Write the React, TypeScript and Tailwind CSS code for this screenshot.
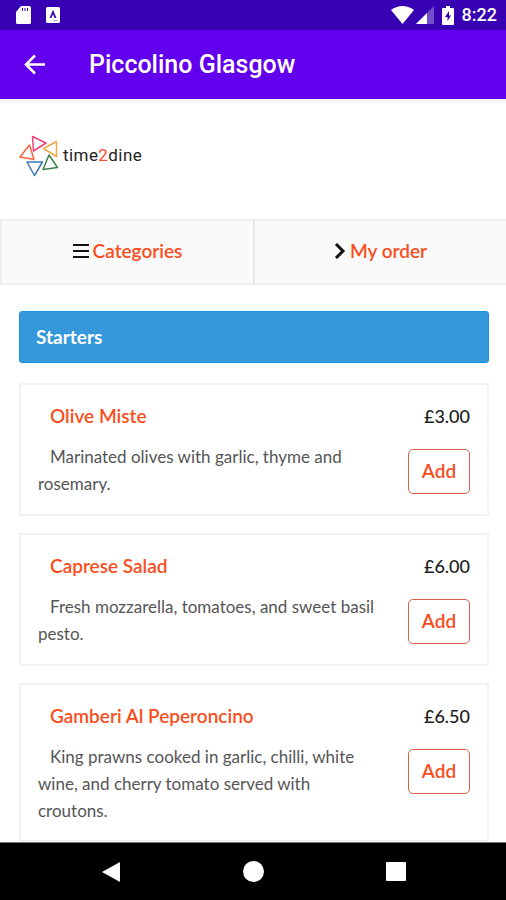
type Dish = { name: string; description: string; price: string };

const dishes: Dish[] = [
  { name: "Olive Miste", description: "Marinated olives with garlic, thyme and rosemary.", price: "£3.00" },
  { name: "Caprese Salad", description: "Fresh mozzarella, tomatoes, and sweet basil pesto.", price: "£6.00" },
  {
    name: "Gamberi Al Peperoncino",
    description: "King prawns cooked in garlic, chilli, white wine, and cherry tomato served with croutons.",
    price: "£6.50",
  },
];

function StatusBar() {
  return (
    <div className="flex h-[30px] shrink-0 items-center bg-[#3700b3] px-[9px] text-white">
      <svg className="ml-[6px] h-5 w-4" viewBox="0 0 16 20" aria-hidden="true">
        <path fill="currentColor" d="M6 1h8.500q1.500 0 1.500 1.500v15q0 1.500-1.500 1.500h-12Q1 19 1 17.500V7z" />
        <path stroke="#3700b3" strokeWidth="1" d="M7.500 3v3M10 3v3M12.500 3v3" />
      </svg>
      <svg className="ml-3.5 h-4 w-4" viewBox="0 0 16 16" aria-hidden="true">
        <rect x="1" width="14" height="16" rx="1.500" fill="currentColor" />
        <path fill="none" stroke="#3700b3" strokeWidth="1.800" d="M5.500 11 8 5l2.500 6" />
        <path stroke="#3700b3" d="M8 13.500h5" opacity=".4" />
      </svg>
      <div className="ml-auto flex items-center">
        <svg className="h-[18px] w-[23px]" viewBox="0 0 23 18" aria-hidden="true">
          <path fill="currentColor" d="M0 4Q11.500-4 23 4L11.500 18z" />
        </svg>
        <svg className="ml-0.5 h-[18px] w-[18px]" viewBox="0 0 18 18" aria-hidden="true">
          <path fill="currentColor" opacity=".3" d="M18 0v18H0z" />
          <path fill="currentColor" d="M11 7v11H0z" />
        </svg>
        <svg className="ml-2 h-[19px] w-3" viewBox="0 0 12 19" aria-hidden="true">
          <path fill="currentColor" d="M4 0h4v2h3q1 0 1 1v15q0 1-1 1H1q-1 0-1-1V3q0-1 1-1h3z" />
          <path fill="#3700b3" d="M7 5 3 11H5.500V15L9 9.500H7z" />
        </svg>
        <span className="ml-2 font-['Roboto',sans-serif] text-lg font-medium">8:22</span>
      </div>
    </div>
  );
}

function Logo() {
  return (
    <div className="flex h-[116px] items-center px-[18px] pb-2.5">
      <svg className="h-[44px] w-[42px]" viewBox="0 0 42 44" fill="none" strokeWidth="1.500" strokeLinejoin="round" aria-hidden="true">
        <path stroke="#ef4277" d="M14.500 2.500 28 9 15.500 17z" />
        <path stroke="#f5a742" d="M38.500 7.500V22.500L25.500 14.500z" />
        <path stroke="#f2663f" d="M11.500 11 16 25.500 2 23z" />
        <path stroke="#3d8050" d="M31 21 39.500 33.500 25 35.500z" />
        <path stroke="#3b79b8" d="M9 28H24.500L16.500 41.500z" />
      </svg>
      <span className="ml-[3px] font-['Roboto',sans-serif] text-[17px] tracking-wide text-[#222]">
        time<span className="text-[#ff4b32]">2</span>dine
      </span>
    </div>
  );
}

function Tabs() {
  return (
    <nav className="grid h-[66px] shrink-0 grid-cols-2 border-y-2 border-[#eee] bg-[#fafafa] text-[19px] font-semibold text-[#fa4d1c]">
      <a href="#categories" className="flex items-center justify-center gap-1 border-l-2 border-[#eee] pb-0.5">
        <svg className="h-4 w-4" viewBox="0 0 16 16" stroke="#111" strokeWidth="2" aria-hidden="true">
          <path d="M0 2h16M0 8h16M0 14h16" />
        </svg>
        Categories
      </a>
      <a href="#order" className="flex items-center justify-center gap-1 border-l-2 border-[#e8e8e8] pb-0.5">
        <svg className="h-4 w-3" viewBox="0 0 12 16" fill="none" stroke="#111" strokeWidth="3" aria-hidden="true">
          <path d="m2 1 7 7-7 7" />
        </svg>
        My order
      </a>
    </nav>
  );
}

function DishCard({ dish }: { dish: Dish }) {
  return (
    <article className="flex min-h-[133px] justify-between border-2 border-[#f2f2f2] px-[17px] pt-[18px] pb-4">
      <div className="max-w-[344px]">
        <h3 className="pl-3 text-[19px] leading-[25px] font-semibold text-[#fa4d1c]">{dish.name}</h3>
        <p className="mt-[15px] indent-3 text-[17px] leading-[27px] text-[#555]">{dish.description}</p>
      </div>
      <div className="flex shrink-0 flex-col items-end">
        <span className="text-lg leading-[27px] font-medium text-[#1c1c1c]">{dish.price}</span>
        <button
          type="button"
          aria-label={`Add ${dish.name}`}
          className="mt-[19px] h-[45px] w-[62px] rounded-[5px] border border-[#dc5f4c] text-[19px] font-semibold text-[#fa4d1c]"
        >
          Add
        </button>
      </div>
    </article>
  );
}

function SystemNav() {
  return (
    <div className="flex h-[58px] shrink-0 items-center justify-center gap-[122px] border-t border-[#777] bg-black text-white">
      <button type="button" aria-label="Back">
        <svg className="h-[22px] w-5" viewBox="0 0 20 22" fill="currentColor" aria-hidden="true">
          <path d="M20 1v20L2 11z" />
        </svg>
      </button>
      <button type="button" aria-label="Home">
        <svg className="h-[22px] w-[22px]" viewBox="0 0 22 22" fill="currentColor" aria-hidden="true">
          <circle cx="11.500" cy="10.500" r="10.500" />
        </svg>
      </button>
      <button type="button" aria-label="Recent apps">
        <svg className="h-5 w-5" viewBox="0 0 20 20" fill="currentColor" aria-hidden="true">
          <rect width="20" height="19" rx="1" />
        </svg>
      </button>
    </div>
  );
}

export default function App() {
  return (
    <div className="flex h-screen flex-col overflow-hidden bg-white font-['Lato',sans-serif]">
      <StatusBar />
      <header className="flex h-[69px] shrink-0 items-center bg-[#6200ee] pl-[24px] text-white">
        <button type="button" aria-label="Go back">
          <svg className="h-[22px] w-[22px]" viewBox="0 0 22 22" fill="none" stroke="currentColor" strokeWidth="2.500" aria-hidden="true">
            <path d="M21 10.500H3M11 1.500l-9 9 9 9" />
          </svg>
        </button>
        <h1 className="ml-[43px] font-['Roboto',sans-serif] text-[25px] font-medium">Piccolino Glasgow</h1>
      </header>
      <main className="min-h-0 flex-1 overflow-hidden border-t-4 border-[#f3f3f0]">
        <Logo />
        <Tabs />
        <section className="pt-[26px] pr-[17px] pl-[19px]">
          <h2 className="rounded-[3px] border border-[#1b8fdb] bg-[#3498db] px-4 pt-[11px] pb-3 text-[19px] leading-[27px] font-bold text-white">
            Starters
          </h2>
          <div className="mt-5 flex flex-col gap-[17px]">
            {dishes.map((dish) => (
              <DishCard key={dish.name} dish={dish} />
            ))}
          </div>
        </section>
      </main>
      <SystemNav />
    </div>
  );
}
